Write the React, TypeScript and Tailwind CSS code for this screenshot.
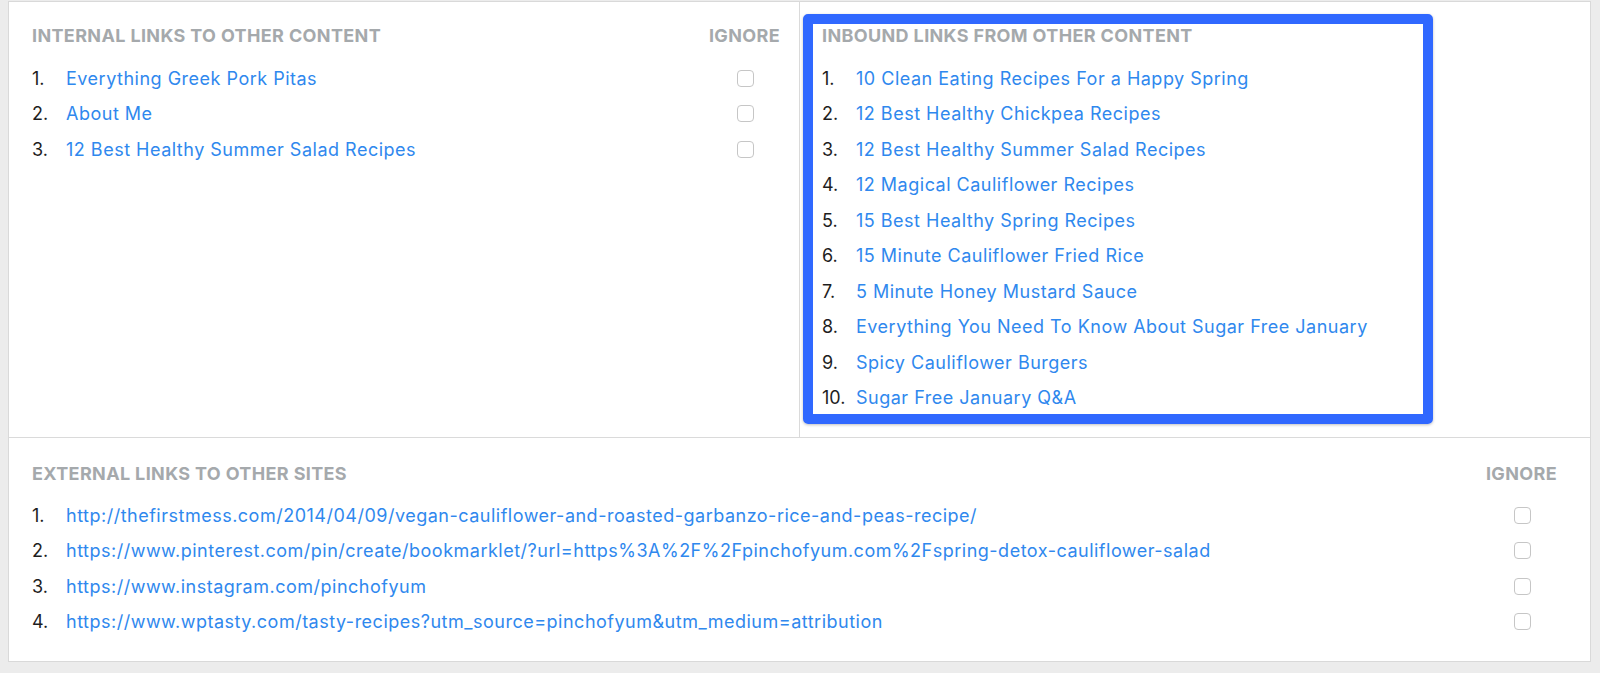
import React from "react";

const internal = ["Everything Greek Pork Pitas", "About Me", "12 Best Healthy Summer Salad Recipes"];
const inbound = [
  "10 Clean Eating Recipes For a Happy Spring",
  "12 Best Healthy Chickpea Recipes",
  "12 Best Healthy Summer Salad Recipes",
  "12 Magical Cauliflower Recipes",
  "15 Best Healthy Spring Recipes",
  "15 Minute Cauliflower Fried Rice",
  "5 Minute Honey Mustard Sauce",
  "Everything You Need To Know About Sugar Free January",
  "Spicy Cauliflower Burgers",
  "Sugar Free January Q&A",
];
const external = [
  "http://thefirstmess.com/2014/04/09/vegan-cauliflower-and-roasted-garbanzo-rice-and-peas-recipe/",
  "https://www.pinterest.com/pin/create/bookmarklet/?url=https%3A%2F%2Fpinchofyum.com%2Fspring-detox-cauliflower-salad",
  "https://www.instagram.com/pinchofyum",
  "https://www.wptasty.com/tasty-recipes?utm_source=pinchofyum&utm_medium=attribution",
];

function Box() {
  return <div className="w-[17px] h-[17px] rounded-[4px] border border-[#c6c6c6] bg-white" />;
}

function Heading({ children }: { children: React.ReactNode }) {
  return (
    <div className="text-[18px] leading-[22px] font-bold uppercase tracking-[0.02em] text-[#a5a9ac]">{children}</div>
  );
}

function Row({ n, text, ignore }: { n: number; text: string; ignore?: boolean }) {
  return (
    <div className="flex items-center h-[35.5px]">
      <div className="w-[34px] shrink-0 text-[#1e1e1e] tracking-normal">{n}.</div>
      <div className="flex-1 text-[#2f88ee] whitespace-nowrap">{text}</div>
      {ignore && (
        <div className="w-[70px] flex justify-center">
          <Box />
        </div>
      )}
    </div>
  );
}

export default function App() {
  return (
    <div
      className="w-[1600px] h-[673px] bg-[#ececec] pt-px pl-2 pr-[9px] overflow-hidden text-[18px] tracking-[0.5px]"
      style={{ fontFamily: "Inter, 'Noto Sans', sans-serif" }}
    >
      <div className="h-[661px] bg-white border border-[#d9d9d9] flex flex-col">
        <div className="h-[436px] border-b border-[#dadada] flex">
          <div className="w-[791px] border-r border-[#dadada] pl-[23px] pr-[19px] pt-[23px]">
            <div className="flex justify-between mb-[13.5px]">
              <Heading>Internal Links to Other Content</Heading>
              <Heading>Ignore</Heading>
            </div>
            {internal.map((t, i) => (
              <Row key={i} n={i + 1} text={t} ignore />
            ))}
          </div>
          <div className="flex-1 pl-[3px] pt-[12px]">
            <div className="w-[630px] h-[410px] border-[10px] border-[#3068ff] rounded-[5px] shadow-[0_1px_3px_rgba(0,0,0,0.25)] pl-[9px] pt-px">
              <div className="mb-[13.5px]">
                <Heading>Inbound Links from Other Content</Heading>
              </div>
              {inbound.map((t, i) => (
                <Row key={i} n={i + 1} text={t} />
              ))}
            </div>
          </div>
        </div>
        <div className="flex-1 pl-[23px] pr-[33px] pt-[25px]">
          <div className="flex justify-between mb-[12.5px]">
            <Heading>External Links to Other Sites</Heading>
            <Heading>Ignore</Heading>
          </div>
          {external.map((t, i) => (
            <Row key={i} n={i + 1} text={t} ignore />
          ))}
        </div>
      </div>
    </div>
  );
}
